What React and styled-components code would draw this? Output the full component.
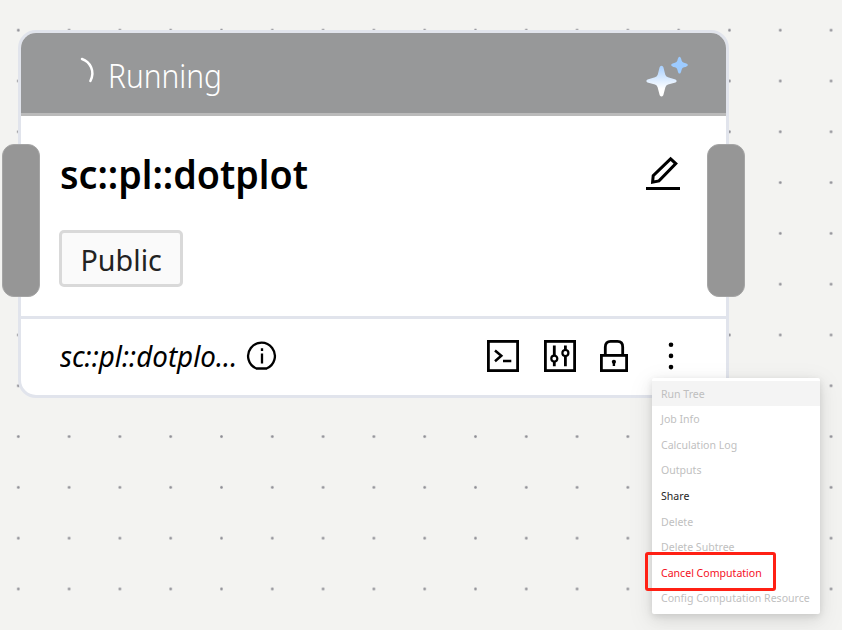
import React from "react";
import styled, { createGlobalStyle, css } from "styled-components";

const GlobalStyle = createGlobalStyle`
  * { box-sizing: border-box; }
  body { margin: 0; font-family: "Noto Sans", "Open Sans", sans-serif; }
`;

const Canvas = styled.main`
  position: relative;
  width: 842px;
  height: 630px;
  padding: 30px 0 0 18px;
  overflow: hidden;
  background-color: #f3f3f1;
  background-image: radial-gradient(circle at 50% 50%, #8b8b92 0.8px, transparent 1.8px);
  background-size: 50.8px 50.8px;
  background-position: -7.1px 4.8px;
`;

const Card = styled.section`
  position: relative;
  display: flex;
  flex-direction: column;
  width: 711px;
  height: 368px;
  border: 3px solid #e1e4ec;
  border-radius: 18px;
  background: #fff;
`;

const CardHeader = styled.header`
  display: flex;
  align-items: center;
  justify-content: space-between;
  height: 83px;
  padding: 5px 38px 0 56px;
  border-bottom: 3px solid #bababa;
  border-radius: 15px 15px 0 0;
  background: #979899;
`;

const Status = styled.div`
  display: flex;
  align-items: center;
  gap: 8px;
`;

const Label = styled.span`
  display: block;
  white-space: nowrap;
  transform: scaleX(${(p) => p.$stretch || 1});
  transform-origin: left center;
`;

const StatusText = styled(Label)`
  height: 44px;
  font-size: 33px;
  line-height: 44px;
  font-weight: 300;
  color: #fff;
`;

const CardBody = styled.div`
  display: flex;
  flex-direction: column;
  height: 200px;
  padding: 32px 46px 0 39px;
`;

const TitleRow = styled.div`
  display: flex;
  align-items: center;
  justify-content: space-between;
  height: 52px;
`;

const Title = styled(Label).attrs({ as: "h1" })`
  margin: 0;
  font-size: 39px;
  line-height: 52px;
  font-weight: 600;
  color: #000;
`;

const Tag = styled.div`
  width: 124px;
  height: 57px;
  margin: 30px 0 0 -1px;
  padding-left: 18.5px;
  border: 3px solid #d9d9d9;
  border-radius: 5px;
  background: #fafafa;
  color: #222;
  font-size: 28.7px;
  line-height: 53px;
`;

const CardFooter = styled.footer`
  display: flex;
  align-items: center;
  height: 79px;
  padding: 0 52px 2px 39px;
  border-top: 3px solid #e1e4ec;
`;

const FileName = styled(Label)`
  width: 187px;
  font-size: 29px;
  line-height: 40px;
  font-style: italic;
  color: #000;
`;

const Actions = styled.div`
  display: flex;
  align-items: center;
  gap: 25px;
  margin-left: auto;
`;

const IconButton = styled.button`
  display: flex;
  padding: 0;
  border: 0;
  background: none;
  color: #000;
`;

const Glyph = styled.svg`
  display: block;
  overflow: visible;
  fill: none;
  stroke: currentColor;
  stroke-width: 2.8;
`;

const EditButton = styled(IconButton)`
  margin-bottom: 3px;
`;

const Handle = styled.div`
  position: absolute;
  top: 111px;
  ${(p) => (p.$side === "left" ? css`left: -19px;` : css`right: -19px;`)}
  width: 38px;
  height: 153px;
  border: 1px solid #a5a5a5;
  border-radius: 12px;
  background: #969696;
`;

const Menu = styled.ul`
  position: absolute;
  left: 652px;
  top: 378px;
  width: 168px;
  height: 236px;
  margin: 0;
  padding: 2.7px 0;
  list-style: none;
  border-radius: 2px;
  background: #fff;
  box-shadow: 0 2px 6px rgba(0, 0, 0, 0.08), 0 4px 14px rgba(0, 0, 0, 0.08),
    0 7px 24px 5px rgba(0, 0, 0, 0.05);
`;

const tones = { muted: "#bfbfbf", normal: "#1f1f1f", danger: "#f5101e" };

const MenuItem = styled.li`
  height: 25.6px;
  padding-left: 9.3px;
  background: ${(p) => (p.$hovered ? "#f4f4f4" : "transparent")};
  color: ${(p) => tones[p.$tone]};
  font-size: 11px;
  line-height: 26px;
`;

const Highlight = styled.div`
  position: absolute;
  left: 645px;
  top: 552px;
  width: 131px;
  height: 39px;
  border: 3px solid #ff2014;
  border-radius: 3px;
`;

const items = [
  { text: "Run Tree", hovered: true },
  { text: "Job Info" },
  { text: "Calculation Log" },
  { text: "Outputs" },
  { text: "Share", tone: "normal" },
  { text: "Delete" },
  { text: "Delete Subtree" },
  { text: "Cancel Computation", tone: "danger" },
  { text: "Config Computation Resource" },
];

const Spinner = () => (
  <Glyph width="23" height="34" viewBox="0 0 23 34">
    <path d="M5 0C13 2.6 18.5 12.3 13.4 22" stroke="#fff" strokeWidth="2.5" strokeLinecap="round" />
  </Glyph>
);

const Sparkles = () => (
  <Glyph width="42" height="41" viewBox="0 -1.2 42 41">
    <defs>
      <linearGradient id="bigStar" x1="0" y1="0" x2="0" y2="1">
        <stop offset="0.05" stopColor="#acd2ff" />
        <stop offset="0.75" stopColor="#fff" />
      </linearGradient>
    </defs>
    <path
      d="M15.5 9.5Q17 9.5 17.4 11L19.2 18.2Q19.8 20.3 22 21L29.5 23.2Q31.8 25 29.5 26.2L22 28.3Q20 29 19.4 31L17.3 39Q15.5 41.8 13.7 39L11.6 31Q11 29 9 28.3L1.5 26.2Q-.8 25 1.5 23.4L9 21Q11.2 20.3 11.8 18.2L13.6 11Q14 9.5 15.5 9.5Z"
      fill="url(#bigStar)"
      stroke="none"
    />
    <path
      d="M33.5.5Q34.8.5 35.6 4.2Q36.2 6 38 6.5Q41.8 7.2 41.8 8.8Q41.8 10.4 38 11.1Q36.2 11.6 35.6 13.5Q34.8 17.4 33.5 17.4Q32.2 17.4 31.4 13.5Q30.8 11.6 29 11.1Q25.2 10.4 25.2 8.8Q25.2 7.2 29 6.5Q30.8 6 31.4 4.2Q32.2.5 33.5.5Z"
      fill="#9dcbff"
      stroke="none"
    />
  </Glyph>
);

const EditIcon = () => (
  <Glyph width="34" height="35" viewBox="0 0 34 35">
    <path d="M6.6 27.2 7.2 20.6 24.6 3.8 29.8 8.6 13 25.9Z" strokeWidth="3" />
    <path d="M0 33.5H34" strokeWidth="3" />
  </Glyph>
);

const InfoIcon = () => (
  <Glyph width="29" height="29" viewBox="0 1 29 29">
    <path d="M9.5 27.5A13.4 13.4 0 1 1 19.5 27.5M9 27.5H20" strokeWidth="2.3" />
    <path d="M15 12.5V22.5M15 7.3V10" strokeWidth="2.3" />
  </Glyph>
);

const TerminalIcon = () => (
  <Glyph width="32" height="32" viewBox="0 0 32 32">
    <rect x="1.4" y="1.4" width="29.2" height="29.2" />
    <path d="M8 10.5 14.3 15.8 8 21.2M16 21H24.3" strokeWidth="2.5" />
  </Glyph>
);

const TuneIcon = () => (
  <Glyph width="32" height="32" viewBox="0 0 32 32">
    <rect x="1.4" y="1.4" width="29.2" height="29.2" />
    <path d="M10.3 5.5V15.5M10.3 21.5V26.3M21.4 5.5V10M21.4 16V26.3" />
    <circle cx="10.3" cy="18.6" r="3" strokeWidth="2.2" />
    <circle cx="21.4" cy="13" r="3" strokeWidth="2.2" />
  </Glyph>
);

const LockIcon = () => (
  <Glyph width="28" height="32" viewBox="1 0 28 32">
    <rect x="1.4" y="15.4" width="25.2" height="15.2" />
    <path d="M5.3 15V7C5.3 3.2 7.5 1.4 10.5 1.4H17.5C20.8 1.4 22.7 3.2 22.7 7V15" />
    <circle cx="13.9" cy="21.8" r="2.1" fill="currentColor" stroke="none" />
    <path d="M13.9 22V26" strokeWidth="2.4" />
  </Glyph>
);

const MoreIcon = () => (
  <Glyph width="6" height="30" viewBox="0 0 6 30">
    {[3.7, 14.9, 26.1].map((y) => (
      <circle key={y} cx="3" cy={y} r="2.3" fill="currentColor" stroke="none" />
    ))}
  </Glyph>
);

const MoreButton = styled(IconButton)`
  margin-left: 14px;
`;

export default function App() {
  return (
    <Canvas>
      <GlobalStyle />
      <Card>
        <CardHeader>
          <Status>
            <Spinner />
            <StatusText $stretch={0.904}>Running</StatusText>
          </Status>
          <Sparkles />
        </CardHeader>
        <CardBody>
          <TitleRow>
            <Title $stretch={0.965}>sc::pl::dotplot</Title>
            <EditButton aria-label="Edit"><EditIcon /></EditButton>
          </TitleRow>
          <Tag><Label>Public</Label></Tag>
        </CardBody>
        <CardFooter>
          <FileName $stretch={0.957}>sc::pl::dotplo...</FileName>
          <InfoIcon />
          <Actions>
            <IconButton aria-label="Terminal"><TerminalIcon /></IconButton>
            <IconButton aria-label="Parameters"><TuneIcon /></IconButton>
            <IconButton aria-label="Lock"><LockIcon /></IconButton>
            <MoreButton aria-label="More"><MoreIcon /></MoreButton>
          </Actions>
        </CardFooter>
        <Handle $side="left" />
        <Handle $side="right" />
      </Card>
      <Menu>
        {items.map(({ text, tone = "muted", hovered }) => (
          <MenuItem key={text} $tone={tone} $hovered={hovered}>
            <Label $stretch={0.96}>{text}</Label>
          </MenuItem>
        ))}
      </Menu>
      <Highlight />
    </Canvas>
  );
}
